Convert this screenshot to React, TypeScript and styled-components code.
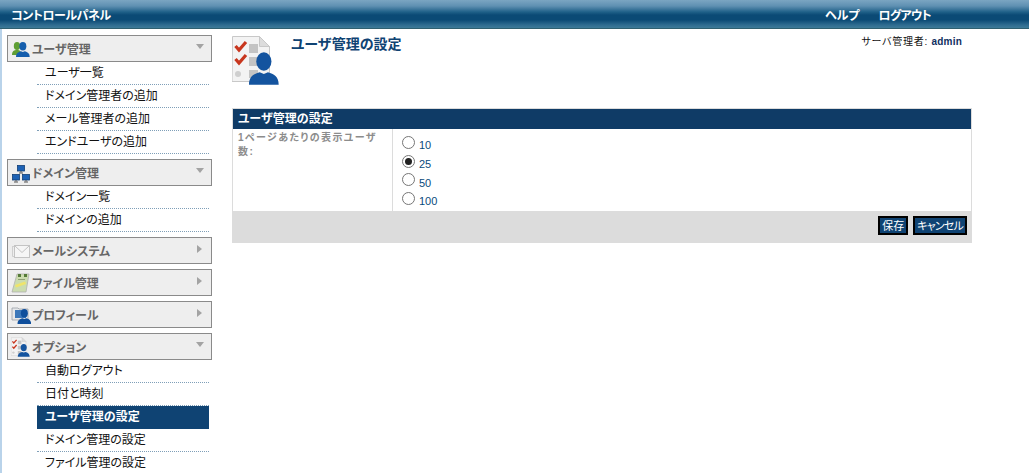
import React from "react";
import styled, { createGlobalStyle } from "styled-components";

const GlobalStyle = createGlobalStyle`
  html, body {
    margin: 0;
    padding: 0;
    background: #fff;
    overflow: hidden;
    font-family: "Liberation Sans", "Noto Sans CJK JP", sans-serif;
    font-feature-settings: "palt";
  }
`;

const Page = styled.div`
  width: 1029px;
  height: 473px;
  overflow: hidden;
`;

const TopBar = styled.header`
  height: 29px;
  box-sizing: border-box;
  border-bottom: 1px solid #2f5f70;
  background: linear-gradient(
    to bottom,
    #7ba5c2 0,
    #5f90b2 6px,
    #1f6088 12px,
    #0b4a75 15px,
    #0b4a75 20px,
    #2f6c90 25px,
    #3d7a98 28px
  );
  display: flex;
  align-items: center;
  padding: 0 0 0 11px;
  color: #fff;
  font-size: 12px;
  font-weight: bold;
`;

const BrandName = styled.div`
  flex: 1;
  letter-spacing: -0.45px;
`;

const TopLinks = styled.nav`
  display: flex;
  gap: 19px;
  width: 204px;
`;

const LogoutLink = styled.span`
  letter-spacing: -0.8px;
`;

const Body = styled.div`
  display: flex;
  align-items: flex-start;
`;

const Sidebar = styled.aside`
  width: 205px;
  padding: 6px 0 0 5px;
  margin-right: 20px;
  border-left: 2px solid #b9d3ea;
  height: 444px;
  flex: none;
`;

const Panel = styled.section`
  margin-bottom: 5px;
`;

const PanelHead = styled.div`
  height: 27px;
  box-sizing: border-box;
  border: 1px solid #8a8a8a;
  background: #eeeeee;
  display: flex;
  align-items: center;
  padding: 0 0 0 3px;
  gap: 1px;
  position: relative;
  color: #666;
  font-size: 12px;
  font-weight: bold;
`;

const HeadIcon = styled.svg`
  width: 20px;
  height: 20px;
  flex: none;
`;

const Arrow = styled.span<{ $open: boolean }>`
  position: absolute;
  width: 0;
  height: 0;
  ${({ $open }) =>
    $open
      ? `top: 8px; right: 7px; border-left: 4px solid transparent; border-right: 4px solid transparent; border-top: 5px solid #a3a3a3;`
      : `top: 7px; right: 9px; border-top: 4px solid transparent; border-bottom: 4px solid transparent; border-left: 5px solid #a3a3a3;`}
`;

const ItemList = styled.ul`
  list-style: none;
  margin: 0 3px 0 30px;
  padding: 0;
`;

const Item = styled.li<{ $active?: boolean }>`
  height: 23px;
  box-sizing: border-box;
  padding: 1px 0 0 8px;
  line-height: 21px;
  font-size: 12px;
  color: ${({ $active }) => ($active ? "#fff" : "#111")};
  font-weight: ${({ $active }) => ($active ? "bold" : "normal")};
  background: ${({ $active }) => ($active ? "#0f4373" : "transparent")};
  border-bottom: ${({ $active }) => ($active ? "none" : "1px dotted #7f9fb8")};
`;

const Main = styled.main`
  width: 740px;
  padding-top: 6px;
`;

const TitleRow = styled.div`
  height: 73px;
  display: flex;
  align-items: flex-start;
`;

const PageIcon = styled.svg`
  width: 50px;
  height: 50px;
  flex: none;
`;

const PageTitle = styled.h1`
  margin: 0 0 0 9px;
  font-size: 14px;
  line-height: 18px;
  color: #0f4373;
  font-weight: bold;
  flex: 1;
`;

const AdminInfo = styled.div`
  font-size: 10px;
  line-height: 14px;
  margin: 0 10px 0 0;
  color: #111;
  letter-spacing: 0.75px;
`;

const AdminName = styled.span`
  font-weight: bold;
  color: #0f2f5f;
  letter-spacing: 0.2px;
`;

const SettingsCard = styled.section`
  border: 1px solid #dcdcdc;
  border-bottom: none;
`;

const CardTitle = styled.h2`
  margin: 0;
  height: 20px;
  line-height: 20px;
  padding-left: 5px;
  background: #0f3b66;
  color: #fff;
  font-size: 12px;
  font-weight: bold;
`;

const FieldRow = styled.div`
  display: grid;
  grid-template-columns: 160px 1fr;
  height: 82px;
`;

const FieldLabel = styled.div`
  padding: 2px 5px;
  border-right: 1px solid #dcdcdc;
  color: #8c8c8c;
  font-size: 10px;
  line-height: 14px;
  font-weight: bold;
  letter-spacing: 1.4px;
`;

const RadioGroup = styled.div`
  padding: 5.5px 0 0 9px;
  display: flex;
  flex-direction: column;
`;

const RadioRow = styled.label`
  display: flex;
  align-items: center;
  gap: 4px;
  height: 18.7px;
  font-size: 11px;
  color: #0a4a7c;
`;

const RadioDot = styled.input`
  appearance: none;
  width: 13px;
  height: 13px;
  margin: 0 0 3px 0;
  border: 1px solid #767676;
  border-radius: 50%;
  background: #fff;
  box-sizing: border-box;
  display: inline-block;
  position: relative;

  &:checked::after {
    content: "";
    position: absolute;
    inset: 2px;
    border-radius: 50%;
    background: #222;
  }
`;

const RadioText = styled.span`
  padding-top: 3px;
`;

const CardFooter = styled.div`
  height: 32px;
  background: #dcdcdc;
  display: flex;
  justify-content: flex-end;
  align-items: flex-start;
  gap: 5px;
  padding: 5px 4px 0 0;
  box-sizing: border-box;
`;

const ActionButton = styled.button<{ $tight?: boolean }>`
  height: 19px;
  padding: 0 2px;
  border: 2px solid #000;
  background: #0f4373;
  color: #fff;
  font-size: 11px;
  line-height: 14px;
  font-family: inherit;
  font-feature-settings: inherit;
  letter-spacing: ${({ $tight }) => ($tight ? "-0.8px" : "0")};
`;

const UserGlyph = ({ x = 0, y = 0, s = 1, fill = "#1d62b5" }: { x?: number; y?: number; s?: number; fill?: string }) => (
  <g transform={`translate(${x} ${y}) scale(${s})`}>
    <ellipse cx="11" cy="7" rx="4.6" ry="5.6" fill={fill} />
    <path d="M2 21c0-5 3-6.5 6.5-7.5l2.5 1 2.5-1c3.5 1 6.5 2.5 6.5 7.5z" fill={fill} />
  </g>
);

const UsersIcon = () => (
  <HeadIcon viewBox="0 0 20 20">
    <ellipse cx="6" cy="7" rx="3.2" ry="4" fill="#5f9e34" />
    <path d="M1 16c0-4 2-5 5-5s4 1 4 5z" fill="#5f9e34" />
    <UserGlyph x={3.5} y={2} s={0.76} fill="#155ead" />
  </HeadIcon>
);

const Monitor = ({ x, y }: { x: number; y: number }) => (
  <g transform={`translate(${x} ${y})`}>
    <rect x="0.5" y="0.5" width="7" height="5.5" fill="#1d62b5" stroke="#123f75" strokeWidth="0.8" />
    <path d="M4 6v1.5M2 8h4" stroke="#555" strokeWidth="1" />
  </g>
);

const NetworkIcon = () => (
  <HeadIcon viewBox="0 0 20 20">
    <Monitor x={6} y={2} />
    <Monitor x={1} y={11} />
    <Monitor x={11} y={11} />
  </HeadIcon>
);

const MailIcon = () => (
  <HeadIcon viewBox="0 0 20 20">
    <path d="M1 5.5h3M1.5 5.5v10h2" fill="none" stroke="#cfcfcf" strokeWidth="1" />
    <rect x="3.5" y="4.5" width="15" height="12" fill="#f6f6f6" stroke="#c4c4c4" />
    <path d="M4 5l7 6.5 7-6.5" fill="none" stroke="#c4c4c4" />
  </HeadIcon>
);

const FileIcon = () => (
  <HeadIcon viewBox="0 0 20 20">
    <path d="M6 1h12l-3 18H1z" fill="#cbdcae" stroke="#b0b0b0" strokeWidth="0.8" />
    <path d="M7 1h3v3H7zM13 1h3v3h-3z" fill="#557a38" />
    <path d="M4 12l10-3.5 1 2.5-10 3.5z" fill="#efe46a" />
    <path d="M7 6.5h7" stroke="#8fa176" strokeWidth="1" />
  </HeadIcon>
);

const ProfileIcon = () => (
  <HeadIcon viewBox="0 0 20 20">
    <path d="M1 3h6l1 1h9v11H1z" fill="#e6e8ea" stroke="#9aa0a6" strokeWidth="0.8" />
    <rect x="4" y="5" width="11" height="8" fill="#3c78ba" />
    <UserGlyph x={5} y={3} s={0.76} fill="#0f4f9c" />
  </HeadIcon>
);

const OptionDoc = () => (
  <>
    <path d="M0.5 1.5h27l10 10v35h-37.5z" fill="#f3f3f3" stroke="#c8c8c8" />
    <path d="M27.5 1.5v10h10z" fill="#dcdcdc" stroke="#c8c8c8" />
    <rect x="17" y="9" width="9" height="9" fill="#c4c4c4" />
    <rect x="17" y="22" width="9" height="9" fill="#c4c4c4" />
    <rect x="17" y="35" width="9" height="8" fill="#c4c4c4" />
    <path d="M3.5 11l3.5 4 7-8M3.5 24l3.5 4 7-8" fill="none" stroke="#c8361e" strokeWidth="3.2" />
    <circle cx="6" cy="39" r="3" fill="#cfcfcf" />
  </>
);

const OptionsIcon = () => (
  <HeadIcon viewBox="0 0 50 50">
    <OptionDoc />
    <UserGlyph x={13.7} y={15} s={1.65} fill="#14549f" />
  </HeadIcon>
);

type Section = {
  name: string;
  icon: React.ReactNode;
  items?: string[];
  active?: string;
};

const sections: Section[] = [
  {
    name: "ユーザ管理",
    icon: <UsersIcon />,
    items: ["ユーザ一覧", "ドメイン管理者の追加", "メール管理者の追加", "エンドユーザの追加"],
  },
  {
    name: "ドメイン管理",
    icon: <NetworkIcon />,
    items: ["ドメイン一覧", "ドメインの追加"],
  },
  { name: "メールシステム", icon: <MailIcon /> },
  { name: "ファイル管理", icon: <FileIcon /> },
  { name: "プロフィール", icon: <ProfileIcon /> },
  {
    name: "オプション",
    icon: <OptionsIcon />,
    items: ["自動ログアウト", "日付と時刻", "ユーザ管理の設定", "ドメイン管理の設定", "ファイル管理の設定"],
    active: "ユーザ管理の設定",
  },
];

export default function App() {
  return (
    <Page>
      <GlobalStyle />
      <TopBar>
        <BrandName>コントロールパネル</BrandName>
        <TopLinks>
          <span>ヘルプ</span>
          <LogoutLink>ログアウト</LogoutLink>
        </TopLinks>
      </TopBar>
      <Body>
        <Sidebar>
          {sections.map((section) => (
            <Panel key={section.name}>
              <PanelHead>
                {section.icon}
                {section.name}
                <Arrow $open={!!section.items} />
              </PanelHead>
              {section.items && (
                <ItemList>
                  {section.items.map((item) => (
                    <Item key={item} $active={item === section.active}>
                      {item}
                    </Item>
                  ))}
                </ItemList>
              )}
            </Panel>
          ))}
        </Sidebar>
        <Main>
          <TitleRow>
            <PageIcon viewBox="0 0 50 50">
              <OptionDoc />
              <UserGlyph x={13.7} y={15} s={1.65} fill="#14549f" />
            </PageIcon>
            <PageTitle>ユーザ管理の設定</PageTitle>
            <AdminInfo>
              サーバ管理者: <AdminName>admin</AdminName>
            </AdminInfo>
          </TitleRow>
          <SettingsCard>
            <CardTitle>ユーザ管理の設定</CardTitle>
            <FieldRow>
              <FieldLabel>1ページあたりの表示ユーザ数:</FieldLabel>
              <RadioGroup>
                {["10", "25", "50", "100"].map((value) => (
                  <RadioRow key={value}>
                    <RadioDot type="radio" name="perPage" defaultChecked={value === "25"} />
                    <RadioText>{value}</RadioText>
                  </RadioRow>
                ))}
              </RadioGroup>
            </FieldRow>
            <CardFooter>
              <ActionButton>保存</ActionButton>
              <ActionButton $tight>キャンセル</ActionButton>
            </CardFooter>
          </SettingsCard>
        </Main>
      </Body>
    </Page>
  );
}
